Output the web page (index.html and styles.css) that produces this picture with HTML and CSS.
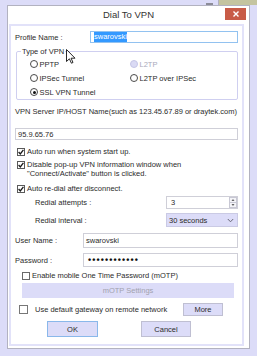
FILE: index.html
```html
<!DOCTYPE html>
<html>
<head>
<meta charset="utf-8">
<link rel="stylesheet" href="styles.css">
</head>
<body>
<div class="screen">
  <div class="topstrip"><span class="mark"></span><span class="olive"></span></div>
  <div class="window">
    <div class="titlebar">
      <span class="title">Dial To VPN</span>
      <span class="close"><svg width="6" height="6" viewBox="0 0 6 6"><path d="M0.5 0.5L5.5 5.5M5.5 0.5L0.5 5.5" stroke="#fff" stroke-width="1.4"/></svg></span>
    </div>
    <div class="client">
      <div class="row profile">
        <span class="lbl-profile">Profile Name :</span>
        <div class="input focus"><span class="sel">swarovski</span></div>
      </div>
      <fieldset class="vpntype">
        <legend>Type of VPN</legend>
        <div class="radios">
          <div class="radio"><span class="dot"></span>PPTP</div>
          <div class="radio disabled"><span class="dot"></span>L2TP</div>
          <div class="radio"><span class="dot"></span>IPSec Tunnel</div>
          <div class="radio"><span class="dot"></span>L2TP over IPSec</div>
          <div class="radio checked"><span class="dot"></span>SSL VPN Tunnel</div>
        </div>
      </fieldset>
      <div class="srvlabel">VPN Server IP/HOST Name(such as 123.45.67.89 or draytek.com)</div>
      <div class="row server"><div class="input">95.9.65.76</div></div>
      <div class="check c1"><span class="box on"><svg width="6" height="6" viewBox="0 0 6 6"><path d="M0.6 3L2.3 4.9L5.4 0.8" fill="none" stroke="#1a1a1a" stroke-width="1.3"/></svg></span><span>Auto run when system start up.</span></div>
      <div class="check c2"><span class="box on"><svg width="6" height="6" viewBox="0 0 6 6"><path d="M0.6 3L2.3 4.9L5.4 0.8" fill="none" stroke="#1a1a1a" stroke-width="1.3"/></svg></span><span>Disable pop-up VPN information window when<br>"Connect/Activate" button is clicked.</span></div>
      <div class="check c3"><span class="box on"><svg width="6" height="6" viewBox="0 0 6 6"><path d="M0.6 3L2.3 4.9L5.4 0.8" fill="none" stroke="#1a1a1a" stroke-width="1.3"/></svg></span><span>Auto re-dial after disconnect.</span></div>
      <div class="row redial r1">
        <span class="rlabel">Redial attempts :</span>
        <div class="spinner"><span class="spinval">3</span><span class="arrows"><svg width="8" height="11" viewBox="0 0 8 11"><rect x="0.5" y="0.5" width="7" height="10" fill="#f4f4f8" stroke="#c8c8d4"/><line x1="0.5" y1="5.5" x2="7.5" y2="5.5" stroke="#c8c8d4"/><path d="M2.5 3.8L4 2.2L5.5 3.8Z" fill="#333"/><path d="M2.5 7.2L4 8.8L5.5 7.2Z" fill="#333"/></svg></span></div>
      </div>
      <div class="row redial r2">
        <span class="rlabel">Redial interval :</span>
        <div class="select"><span>30 seconds</span><svg width="7" height="5" viewBox="0 0 7 5"><path d="M0.8 1L3.5 3.8L6.2 1" fill="none" stroke="#6a6a78" stroke-width="1"/></svg></div>
      </div>
      <div class="row user">
        <span class="lbl-user">User Name :</span>
        <div class="input">swarovski</div>
      </div>
      <div class="row pass">
        <span class="lbl-user">Password :</span>
        <div class="input dots">••••••••••••</div>
      </div>
      <div class="check c4"><span class="box"></span><span>Enable mobile One Time Password (mOTP)</span></div>
      <div class="motpbtn">mOTP Settings</div>
      <div class="row gateway">
        <span class="box gbox"></span>
        <span class="glabel">Use default gateway on remote network</span>
        <span class="btn more">More</span>
      </div>
      <div class="row actions">
        <span class="btn ok">OK</span>
        <span class="btn cancel">Cancel</span>
      </div>
    </div>
  </div>
  <svg class="cursor" width="10" height="15" viewBox="0 0 10 15"><path d="M0.5 0.5L0.5 12.5L3.4 9.8L5.4 14.2L7 13.5L5.1 9.2L9 9.2Z" fill="#fff" stroke="#111" stroke-width="0.9" stroke-linejoin="round"/></svg>
</div>
</body>
</html>
```

FILE: styles.css
```css
* { box-sizing: border-box; }
body {
  margin: 0;
  background: #dcdcf8;
  font-family: "Liberation Sans", Arial, sans-serif;
  font-size: 7.5px;
  color: #2b2b2b;
}
.screen {
  width: 257px;
  height: 356px;
  overflow: hidden;
  position: relative;
}
.topstrip {
  height: 5px;
  display: flex;
}
.topstrip .mark {
  margin: 3px 0 0 206px;
  width: 7px;
  height: 2px;
  background: #8c8c98;
}
.topstrip .olive {
  margin-left: 5px;
  flex: 1;
  background: #c4c4a0;
  border-left: 1px solid #b0b0c0;
}
.window {
  margin-left: 7px;
  width: 243px;
  height: 344px;
  background: #fff;
  border: 1px solid #b2b2c0;
  display: flex;
  flex-direction: column;
}
.titlebar {
  height: 18px;
  flex: none;
  display: grid;
  grid-template-columns: 1fr auto 1fr;
  align-items: start;
}
.title {
  grid-column: 2;
  font-size: 9.5px;
  line-height: 18px;
  color: #333;
}
.close {
  grid-column: 3;
  justify-self: end;
  margin: 2px 3px 0 0;
  width: 21px;
  height: 12px;
  background: #c85b47;
  display: flex;
  align-items: center;
  justify-content: center;
}
.close svg { display: block; }
.client {
  margin: 0 5px 0 1px;
  height: 322px;
  border: 2px solid #e2e2f9;
  padding: 0 4px;
}
.row {
  display: flex;
  align-items: center;
}
.input {
  flex: 1;
  height: 100%;
  border: 1px solid #cfcfd8;
  background: #fff;
  display: flex;
  align-items: center;
  padding-left: 2px;
  white-space: nowrap;
}
.input.focus {
  border-color: #92c2f0;
  padding-left: 3px;
}
.sel {
  background: #3399ff;
  color: #fff;
  line-height: 10px;
}
.profile { margin-top: 5px; height: 12px; }
.lbl-profile { width: 75px; }
.vpntype {
  margin: 4px 0 0 1px;
  padding: 1px 0 0 4px;
  border: 1px solid #cfcff0;
  border-radius: 2px;
  min-width: 0;
}
.vpntype legend {
  padding: 0 1px;
  line-height: 9px;
}
.radios {
  display: grid;
  grid-template-columns: 100px auto;
  grid-auto-rows: 14px;
  margin-left: 9px;
}
.radio {
  display: flex;
  align-items: center;
  gap: 1.5px;
}
.dot {
  width: 8px;
  height: 8px;
  border: 1px solid #4a4a4a;
  border-radius: 50%;
  background: #fff;
  position: relative;
}
.radio.checked .dot::after {
  content: "";
  position: absolute;
  inset: 1.5px;
  background: #111;
  border-radius: 50%;
}
.radio.disabled { color: #a9a9bb; }
.radio.disabled .dot {
  background: #dadaf4;
  border-color: #c6c6e6;
}
.srvlabel {
  margin-top: 7px;
  line-height: 10px;
  white-space: nowrap;
}
.server { margin-top: 11px; height: 12px; }
.check {
  display: flex;
  align-items: flex-start;
  gap: 2px;
  line-height: 9px;
}
.box {
  width: 8px;
  height: 8px;
  flex: none;
  border: 1px solid #5a5a5a;
  background: #fff;
  display: flex;
  align-items: center;
  justify-content: center;
  margin-top: 0.5px;
}
.box svg { display: block; }
.c1 { margin: 7px 0 0 2px; }
.c2 { margin: 4px 0 0 2px; }
.c3 { margin: 6px 0 0 2px; }
.c4 { margin: 4px 0 0 7px; }
.c4 .box { border-color: #6a6a6a; }
.redial { padding-left: 20px; }
.r1 { margin-top: 3px; height: 13px; }
.r2 { margin-top: 4px; height: 14px; }
.rlabel { flex: 1; }
.spinner {
  width: 72px;
  height: 100%;
  border: 1px solid #cfcfd8;
  display: flex;
  align-items: center;
  justify-content: space-between;
  padding-left: 4px;
}
.arrows { display: flex; margin-right: 0; }
.arrows svg { display: block; }
.select {
  width: 72px;
  height: 100%;
  background: #dcdcf8;
  border: 1px solid #cacae4;
  display: flex;
  align-items: center;
  justify-content: space-between;
  padding: 0 3px 0 2px;
}
.select svg { display: block; }
.user { margin-top: 6px; height: 15px; }
.pass { margin-top: 5px; height: 14px; }
.lbl-user { width: 68px; }
.dots {
  font-size: 9px;
  font-weight: bold;
  letter-spacing: 1.1px;
  color: #111;
  padding-left: 4px;
}
.motpbtn {
  margin: 3px 4px 0 7px;
  height: 15px;
  background: #dcdcf8;
  color: #a2a2ae;
  display: flex;
  align-items: center;
  justify-content: center;
}
.gateway { margin-top: 5px; height: 13px; }
.gbox { margin: 0 0 0 4px; width: 9px; height: 9px; border-color: #777; }
.glabel { margin-left: 7px; }
.btn {
  display: flex;
  align-items: center;
  justify-content: center;
  height: 100%;
  background: #dcdcf8;
  border: 1px solid #bfbfd2;
}
.more { margin-left: auto; margin-right: 15px; width: 40px; }
.actions { margin-top: 5px; height: 16px; }
.ok { margin-left: 32px; width: 51px; border-color: #8ab8ea; }
.cancel { margin-left: 43px; width: 50px; }
.cursor {
  position: absolute;
  left: 66px;
  top: 49px;
}
```
